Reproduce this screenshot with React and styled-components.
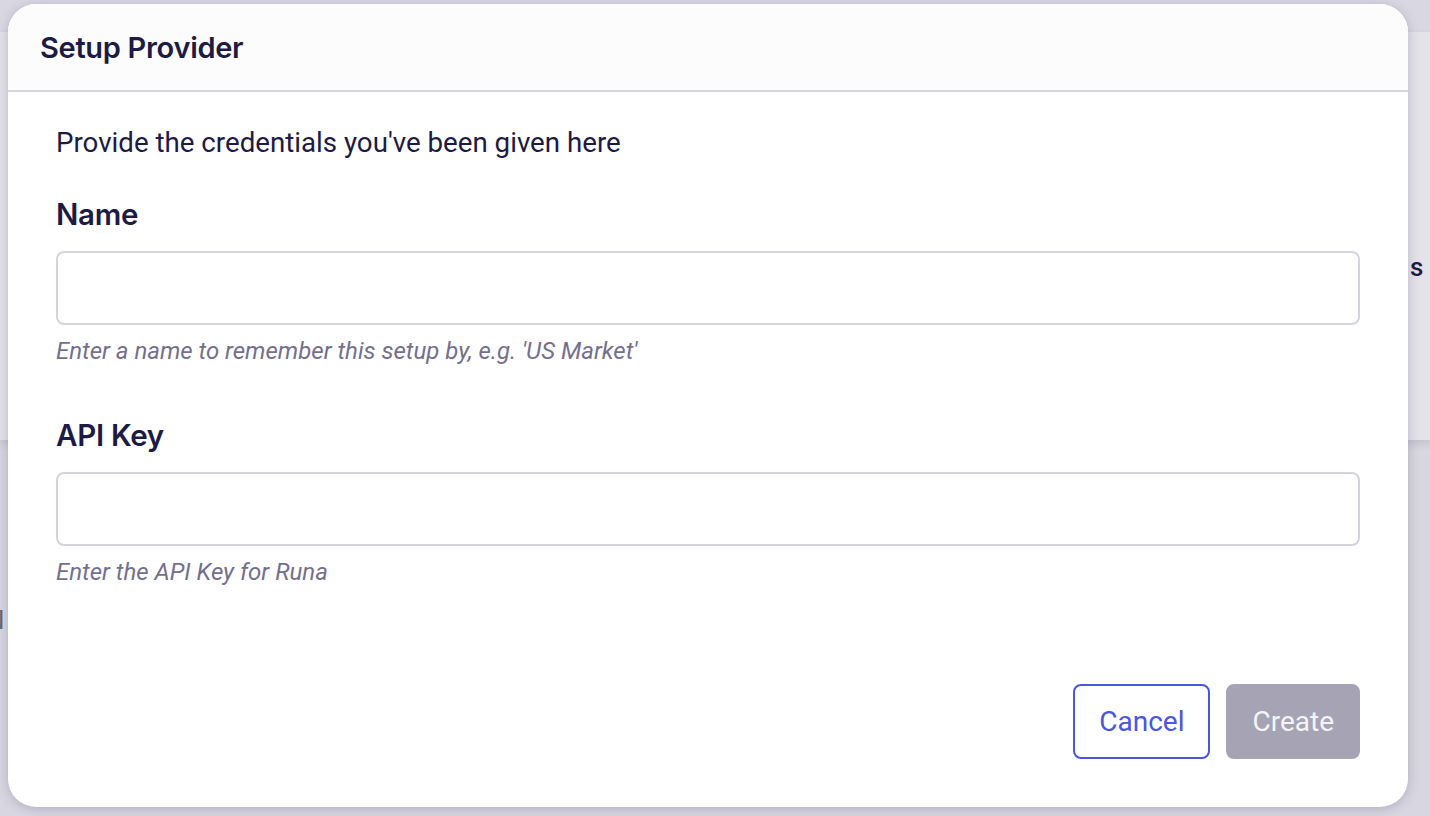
import React from "react";
import styled, { createGlobalStyle } from "styled-components";

const TEXT_COLOR = "#1d1a44";
const HINT_COLOR = "#736f8e";
const BORDER_COLOR = "#d5d4dc";
const PRIMARY_COLOR = "#4a55e0";

const GlobalStyle = createGlobalStyle`
    html, body {
        margin: 0;
        padding: 0;
        width: 100%;
        height: 100%;
        overflow: hidden;
    }
    body {
        font-family: Roboto, "Liberation Sans", sans-serif;
        background-color: #d8d7e1;
    }
`

// the page that sits under the dimmed backdrop
const PageBehind = styled.div`
    position: fixed;
    inset: 0;
    display: flex;
    flex-direction: column;
    background-color: #d8d7e1;
`

const TopBar = styled.div`
    height: 32px;
    background-color: #d9d8e2;
`

const BehindCard = styled.div`
    height: 408px;
    background-color: #e4e3ea;
    box-shadow: 0 4px 8px rgba(40, 36, 80, 0.12);
`

const PeekText = styled.div`
    position: fixed;
    left: ${(props) => props.left};
    top: ${(props) => props.top};
    font-size: 26px;
    font-weight: ${(props) => (props.dark ? 500 : 400)};
    color: ${(props) => (props.dark ? TEXT_COLOR : "#6a6a72")};
`

const Modal = styled.section`
    position: fixed;
    left: 8px;
    top: 4px;
    width: 1400px;
    height: 803px;
    background-color: white;
    border-radius: 28px;
    box-shadow: 0 2px 12px rgba(30, 26, 68, 0.22);
    display: flex;
    flex-direction: column;
    overflow: hidden;
`

const ModalHeader = styled.header`
    height: 86px;
    flex-shrink: 0;
    display: flex;
    align-items: center;
    padding: 0 32px;
    background-color: #fcfcfc;
    border-bottom: 2px solid #d6d5dd;
`

const Title = styled.h2`
    margin: 0;
    font-family: Inter, "Noto Sans", sans-serif;
    font-weight: 600;
    font-size: 29px;
    color: ${TEXT_COLOR};
    letter-spacing: -0.3px;
`

const ModalBody = styled.div`
    flex: 1;
    display: flex;
    flex-direction: column;
    padding: 35px 48px 48px 48px;
`

const Intro = styled.p`
    margin: 0 0 39px 0;
    font-size: 27.7px;
    line-height: 32px;
    color: ${TEXT_COLOR};
`

const Field = styled.div`
    display: flex;
    flex-direction: column;
    margin-bottom: ${(props) => props.gap || "0px"};
`

const Label = styled.label`
    font-family: Inter, "Noto Sans", sans-serif;
    font-weight: 600;
    font-size: 29.5px;
    line-height: 32px;
    color: ${TEXT_COLOR};
    margin-bottom: 21px;
    letter-spacing: -0.3px;
`

const Input = styled.input`
    box-sizing: border-box;
    height: 74px;
    width: 100%;
    border: 2px solid ${BORDER_COLOR};
    border-radius: 8px;
    padding: 0 20px;
    font-family: Roboto, sans-serif;
    font-size: 24px;
    color: ${TEXT_COLOR};
    background: white;
    outline: none;
`

const Hint = styled.span`
    margin-top: 14px;
    font-size: 24px;
    line-height: 24px;
    font-style: italic;
    color: ${HINT_COLOR};
`

const Footer = styled.div`
    margin-top: auto;
    display: flex;
    justify-content: flex-end;
    gap: 16px;
`

const Button = styled.button`
    box-sizing: border-box;
    height: 75px;
    padding: 0 24px;
    border-radius: 8px;
    font-family: Roboto, "Liberation Sans", sans-serif;
    font-size: 28px;
    cursor: pointer;
    border: 2px solid ${(props) => (props.primary ? "#a6a3b5" : PRIMARY_COLOR)};
    background-color: ${(props) => (props.primary ? "#a6a3b5" : "white")};
    color: ${(props) => (props.primary ? "#f4f4f7" : PRIMARY_COLOR)};
    min-width: ${(props) => props.width || "auto"};
`

export default function App() {
    return (
        <>
            <GlobalStyle />
            <PageBehind>
                <TopBar />
                <BehindCard />
            </PageBehind>
            <PeekText dark left="1410px" top="252px">s</PeekText>
            <PeekText left="-14px" top="605px">N</PeekText>
            <Modal>
                <ModalHeader>
                    <Title>Setup Provider</Title>
                </ModalHeader>
                <ModalBody>
                    <Intro>Provide the credentials you've been given here</Intro>
                    <Field gap="56px">
                        <Label>Name</Label>
                        <Input type="text" />
                        <Hint>Enter a name to remember this setup by, e.g. 'US Market'</Hint>
                    </Field>
                    <Field>
                        <Label>API Key</Label>
                        <Input type="text" />
                        <Hint>Enter the API Key for Runa</Hint>
                    </Field>
                    <Footer>
                        <Button width="137px">Cancel</Button>
                        <Button primary width="133px">Create</Button>
                    </Footer>
                </ModalBody>
            </Modal>
        </>
    );
}
